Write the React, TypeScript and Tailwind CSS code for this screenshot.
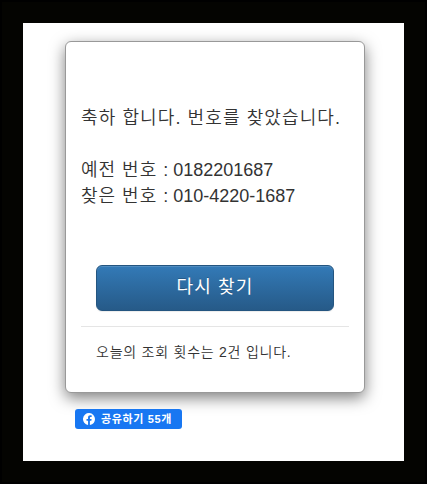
export default function App() {
  return (
    <div className="h-[484px] w-[427px] border-2 border-black bg-[#040401] p-[21px] font-['Liberation_Sans','Noto_Sans_CJK_KR',sans-serif] text-[#333]">
      <main className="h-[438px] w-[381px] bg-white pt-[18px] pl-[42px]">
        <section className="h-[352px] w-[300px] rounded-md border border-[#999] bg-white px-[15px] pt-[63px] shadow-[0_5px_15px_rgba(0,0,0,0.5)]">
          <div className="text-[18px] leading-[26px] font-[350] whitespace-nowrap">
            <p className="tracking-[1.1px]">축하 합니다. 번호를 찾았습니다.</p>
            <p className="mt-[26px]">
              <span className="tracking-[1px]">예전 번호 </span>: 0182201687
            </p>
            <p>
              <span className="tracking-[1px]">찾은 번호 </span>: 010-4220-1687
            </p>
          </div>
          <div className="mt-[56px] px-[15px]">
            <button className="h-[46px] w-[238px] rounded-md border border-[#245580] bg-linear-to-b from-[#337ab7] to-[#265a88] pb-[2px] text-[18px] tracking-[1.2px] text-white shadow-[inset_0_1px_0_rgba(255,255,255,0.15),0_1px_1px_rgba(0,0,0,0.075)] [text-shadow:0_-1px_0_rgba(0,0,0,0.2)]">
              다시 찾기
            </button>
          </div>
          <footer className="mt-[15px] border-t border-[#e5e5e5] px-[15px] pt-[15px] text-[14px] leading-5 font-[350] tracking-[0.76px] whitespace-nowrap">
            오늘의 조회 횟수는 2건 입니다.
          </footer>
        </section>
        <button className="mt-[16px] ml-[10px] flex h-5 w-[107px] items-center gap-[6px] rounded-[3px] bg-[#1877f2] pl-2 text-[11px] font-bold tracking-[0.65px] whitespace-nowrap text-white">
          <svg className="size-3 shrink-0" viewBox="0 0 24 24" fill="currentColor">
            <path d="M24 12a12 12 0 1 0-13.9 11.9v-8.4H7V12h3.1V9.4c0-3 1.8-4.7 4.5-4.7 1.3 0 2.7.2 2.7.2v3h-1.5c-1.5 0-2 .9-2 1.9V12h3.4l-.5 3.5h-2.9v8.4A12 12 0 0 0 24 12z" />
          </svg>
          공유하기 55개
        </button>
      </main>
    </div>
  );
}
